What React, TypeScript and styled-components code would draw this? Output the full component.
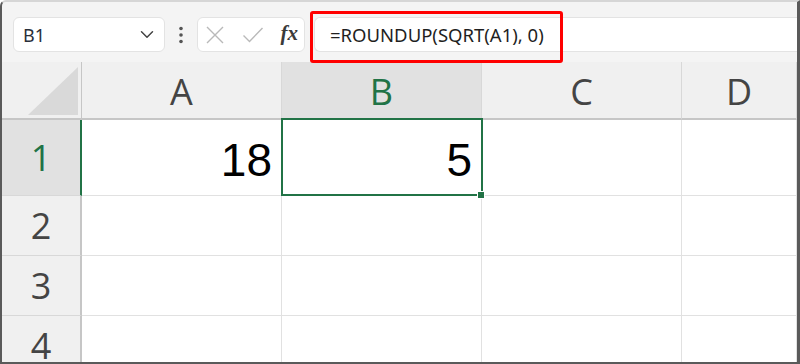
import React from 'react';
import styled, { createGlobalStyle } from 'styled-components';

const GlobalStyle = createGlobalStyle`
  html, body {
    margin: 0;
    padding: 0;
    background: #ffffff;
  }
  * {
    box-sizing: border-box;
  }
`;

const green = '#217346';

const Frame = styled.div`
  width: 800px;
  height: 364px;
  overflow: hidden;
  background: #f4f4f4;
  border-top: 2px solid #d6d6d6;
  border-left: 2px solid #5a5a5a;
  border-right: 3px solid #5a5a5a;
  border-bottom: 2px solid #5a5a5a;
  border-top-left-radius: 6px;
  display: flex;
  flex-direction: column;
`;

const Toolbar = styled.div`
  position: relative;
  height: 60px;
  flex: none;
  display: flex;
  align-items: center;
  padding: 5px 0 0 11px;
  font-family: 'Noto Sans', 'Open Sans', sans-serif;
`;

const Field = styled.div`
  height: 35px;
  background: #ffffff;
  border: 1px solid #e3e3e3;
  border-radius: 6px;
  display: flex;
  align-items: center;
`;

const NameBox = styled(Field)`
  width: 152px;
  padding: 0 10px 0 9px;
  justify-content: space-between;
  font-size: 18px;
  color: #2a2f3a;
`;

const Dots = styled.div`
  width: 32px;
  display: flex;
  justify-content: center;
  color: #555;
`;

const FxBox = styled(Field)`
  width: 108px;
  padding: 0 6px 0 7px;
  justify-content: space-between;
`;

const FormulaField = styled(Field)`
  flex: 1;
  margin-left: 9px;
  border-right: none;
  border-radius: 6px 0 0 6px;
  padding-left: 15px;
  font-size: 18.5px;
  color: #1f1f1f;
`;

const Highlight = styled.div`
  position: absolute;
  left: 308px;
  top: 9px;
  width: 253px;
  height: 52px;
  border: 3px solid #ff0000;
  border-radius: 3px;
  pointer-events: none;
`;

const Sheet = styled.div`
  flex: 1;
  display: grid;
  grid-template-columns: 80px 200px 200px 200px 1fr;
  grid-template-rows: 58px 76px 60px 60px 60px;
  background: #ffffff;
`;

const Corner = styled.div`
  position: relative;
  background: #f0f0f0;
  border-right: 1px solid #c6c6c6;
  border-bottom: 2px solid #c6c6c6;
`;

const CornerTriangle = styled.div`
  position: absolute;
  right: 3px;
  bottom: 3px;
  width: 50px;
  height: 48px;
  background: #d9d9d9;
  clip-path: polygon(100% 0, 100% 100%, 0 100%);
`;

const ColHeader = styled.div<{ $active?: boolean }>`
  background: ${(p) => (p.$active ? '#e1e1e1' : '#f0f0f0')};
  color: ${(p) => (p.$active ? green : '#444444')};
  border-right: 1px solid #d8d8d8;
  border-bottom: 2px solid ${(p) => (p.$active ? green : '#c6c6c6')};
  display: flex;
  align-items: center;
  justify-content: center;
  font-family: 'Open Sans', 'Noto Sans', sans-serif;
  font-size: 36px;
  padding-top: 2px;
`;

const RowHeader = styled.div<{ $active?: boolean }>`
  background: ${(p) => (p.$active ? '#e1e1e1' : '#f0f0f0')};
  color: ${(p) => (p.$active ? green : '#444444')};
  border-right: 2px solid ${(p) => (p.$active ? green : '#c6c6c6')};
  border-bottom: 1px solid #d8d8d8;
  display: flex;
  align-items: center;
  justify-content: center;
  font-family: 'Open Sans', 'Noto Sans', sans-serif;
  font-size: 36px;
`;

const Cell = styled.div<{ $selected?: boolean }>`
  position: relative;
  border-right: 1px solid #e1e1e1;
  border-bottom: 1px solid #e1e1e1;
  display: flex;
  align-items: center;
  justify-content: flex-end;
  padding-right: 9px;
  padding-top: 4px;
  font-family: 'Liberation Sans', Arial, sans-serif;
  font-size: 46px;
  color: #000000;

  ${(p) =>
    p.$selected &&
    `
    &::after {
      content: '';
      position: absolute;
      left: -1px;
      top: -2px;
      right: -2px;
      bottom: -1px;
      border: 2px solid ${green};
      pointer-events: none;
    }
    &::before {
      content: '';
      position: absolute;
      right: -4px;
      bottom: -4px;
      width: 6px;
      height: 6px;
      background: ${green};
      border: 1px solid #ffffff;
      z-index: 2;
    }
  `}
`;

const Chevron = () => (
  <svg width="14" height="9" viewBox="0 0 14 9" fill="none">
    <path d="M1.5 1.8 7 7.2 12.5 1.8" stroke="#444" strokeWidth="1.5" strokeLinecap="round" strokeLinejoin="round" />
  </svg>
);

const VerticalDots = () => (
  <svg width="4" height="18" viewBox="0 0 4 18">
    <circle cx="2" cy="2.5" r="1.8" fill="#555" />
    <circle cx="2" cy="9" r="1.8" fill="#555" />
    <circle cx="2" cy="15.5" r="1.8" fill="#555" />
  </svg>
);

const CancelIcon = () => (
  <svg width="20" height="20" viewBox="0 0 20 20" fill="none">
    <path d="M2 2 18 18M18 2 2 18" stroke="#b9b9b9" strokeWidth="1.4" />
  </svg>
);

const EnterIcon = () => (
  <svg width="22" height="18" viewBox="0 0 22 18" fill="none">
    <path d="M1.5 9.5 7.5 15.5 20.5 2" stroke="#b9b9b9" strokeWidth="1.4" />
  </svg>
);

const FxLabel = styled.span`
  font-family: 'Liberation Serif', 'Times New Roman', serif;
  font-style: italic;
  font-weight: bold;
  font-size: 21px;
  color: #3a3a3a;
  margin-top: -3px;
`;

const columns = ['A', 'B', 'C', 'D'];
const rows: Record<number, Record<string, string>> = {
  1: { A: '18', B: '5' },
  2: {},
  3: {},
  4: {},
};

export default function App() {
  return (
    <>
      <GlobalStyle />
      <Frame>
        <Toolbar>
          <NameBox>
            <span>B1</span>
            <Chevron />
          </NameBox>
          <Dots>
            <VerticalDots />
          </Dots>
          <FxBox>
            <CancelIcon />
            <EnterIcon />
            <FxLabel>fx</FxLabel>
          </FxBox>
          <FormulaField>=ROUNDUP(SQRT(A1), 0)</FormulaField>
          <Highlight />
        </Toolbar>
        <Sheet>
          <Corner>
            <CornerTriangle />
          </Corner>
          {columns.map((c) => (
            <ColHeader key={c} $active={c === 'B'}>
              {c}
            </ColHeader>
          ))}
          {Object.entries(rows).map(([r, values]) => (
            <React.Fragment key={r}>
              <RowHeader $active={r === '1'}>{r}</RowHeader>
              {columns.map((c) => (
                <Cell key={c} $selected={r === '1' && c === 'B'}>
                  {values[c]}
                </Cell>
              ))}
            </React.Fragment>
          ))}
        </Sheet>
      </Frame>
    </>
  );
}
